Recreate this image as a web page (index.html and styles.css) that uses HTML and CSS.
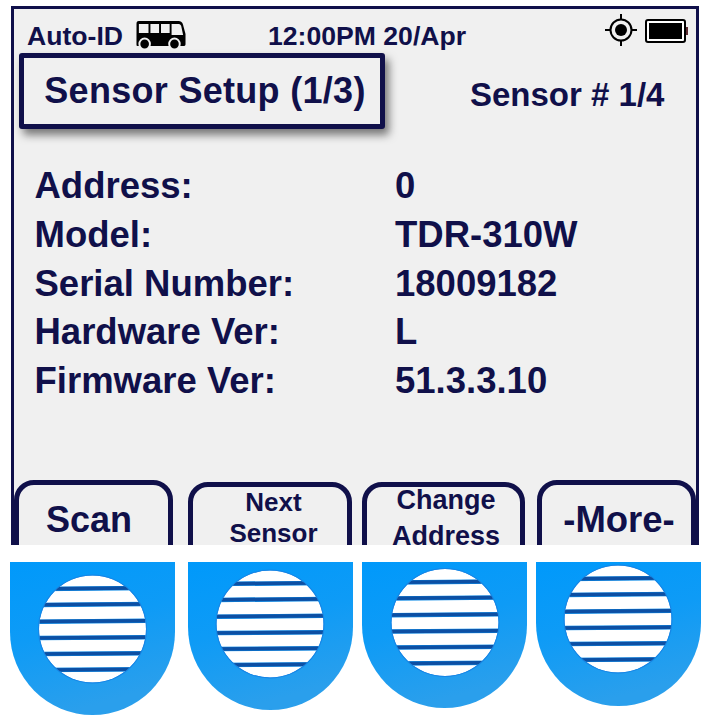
FILE: index.html
```html
<!DOCTYPE html>
<html lang="en">
<head>
  <meta charset="UTF-8">
  <meta name="viewport" content="width=device-width, initial-scale=1.0">
  <title>Sensor Setup</title>
  <link rel="stylesheet" href="styles.css">
</head>
<body>
  <div class="screen">
    <div class="status-bar">
      <span class="mode">Auto-ID</span>
      <svg class="bus" viewBox="0 0 52 29" preserveAspectRatio="none" aria-hidden="true">
        <path d="M3 1H44C47 1 48 2 49 5L51.500 14V24C51.500 25.500 51 26 49 26H1.500C.5 26 .5 25 .5 24V4C.5 2 1 1 3 1Z" fill="#000"/>
        <path d="M3 4H13V13H3ZM15 4H24V13H15ZM26 4H35V13H26ZM37 4H44.500C46 4 46.500 5 47 6L49 15H37Z" fill="#f0f0f0"/>
        <circle cx="9" cy="24" r="5.500" fill="#000" stroke="#f0f0f0" stroke-width="2"/>
        <circle cx="40" cy="24" r="5.500" fill="#000" stroke="#f0f0f0" stroke-width="2"/>
      </svg>
      <span class="clock">12:00PM 20/Apr</span>
      <svg class="gps" viewBox="0 0 34 34" aria-hidden="true">
        <circle cx="17" cy="17" r="10.500" fill="none" stroke="#000" stroke-width="2"/>
        <circle cx="17" cy="17" r="6" fill="#000"/>
        <path d="M17 1V7M17 27V33M1 17H7M27 17H33" stroke="#000" stroke-width="2"/>
      </svg>
      <svg class="battery" viewBox="0 0 44 24" aria-hidden="true">
        <rect x="1" y="1" width="39" height="22" rx="2" fill="#fff" stroke="#000" stroke-width="2"/>
        <rect x="4" y="4" width="33" height="16" fill="#000"/>
        <rect x="41" y="8" width="2" height="8" fill="#5a2a30"/>
      </svg>
    </div>

    <div class="title-row">
      <h1 class="title-box">Sensor Setup (1/3)</h1>
      <div class="sensor-num">Sensor # 1/4</div>
    </div>

    <dl class="info">
      <dt>Address:</dt><dd>0</dd>
      <dt>Model:</dt><dd>TDR-310W</dd>
      <dt>Serial Number:</dt><dd>18009182</dd>
      <dt>Hardware Ver:</dt><dd>L</dd>
      <dt>Firmware Ver:</dt><dd>51.3.3.10</dd>
    </dl>

    <div class="softkeys">
      <div class="softkey softkey-scan"><div class="softkey-label">Scan</div></div>
      <div class="softkey softkey-next"><div class="softkey-label">Next<br>Sensor</div></div>
      <div class="softkey softkey-change"><div class="softkey-label">Change<br>Address</div></div>
      <div class="softkey softkey-more"><div class="softkey-label">-More-</div></div>
    </div>
  </div>

  <svg class="defs" aria-hidden="true">
    <defs>
      <linearGradient id="keyBlue" x1="0" y1="0" x2="0.3" y2="1">
        <stop offset="0" stop-color="#0099fb"/>
        <stop offset="0.5" stop-color="#0e9bf6"/>
        <stop offset="1" stop-color="#2a9fec"/>
      </linearGradient>
      <clipPath id="grilleClip"><circle cx="0" cy="0" r="53.500"/></clipPath>
      <g id="grille">
        <circle r="54.500" fill="#1585e6"/>
        <g clip-path="url(#grilleClip)">
          <circle r="53.500" fill="#fff"/>
          <path d="M-60 -40L60 -41M-60 -24L60 -25M-60 -7.200L60 -8.200M-60 9.100L60 8.100M-60 25.100L60 24.100M-60 41.100L60 40.100" stroke="#0d8ae6" stroke-width="4.500"/>
          <path d="M-42 -40.300L42 -41M-50 -24.200L50 -25M-53 -7.400L53 -8.200M-53 9L53 8.200M-50 25L50 24.200M-42 41L42 40.300" stroke="#0d4fa3" stroke-width="3.500"/>
        </g>
      </g>
    </defs>
  </svg>

  <div class="keypad">
    <svg class="key" width="165" height="153" viewBox="0 0 165 153" aria-hidden="true">
      <path d="M0 0H165V70A82.500 83 0 0 1 0 70Z" fill="url(#keyBlue)"/>
      <use href="#grille" x="82.500" y="67"/>
    </svg>
    <svg class="key key-2" width="165" height="148" viewBox="0 0 165 148" aria-hidden="true">
      <path d="M0 0H165V65A82.500 83 0 0 1 0 65Z" fill="url(#keyBlue)"/>
      <use href="#grille" x="82" y="62"/>
    </svg>
    <svg class="key key-3" width="165" height="146" viewBox="0 0 165 146" aria-hidden="true">
      <path d="M0 0H165V63A82.500 83 0 0 1 0 63Z" fill="url(#keyBlue)"/>
      <use href="#grille" x="83" y="60.500"/>
    </svg>
    <svg class="key key-4" width="165" height="144" viewBox="0 0 165 144" aria-hidden="true">
      <path d="M0 0H165V61A82.500 83 0 0 1 0 61Z" fill="url(#keyBlue)"/>
      <use href="#grille" x="82" y="57"/>
    </svg>
  </div>
</body>
</html>
```

FILE: styles.css
```css
html, body {
  margin: 0;
  padding: 0;
  background: #ffffff;
}
body {
  font-family: "Liberation Sans", Arial, sans-serif;
  font-weight: bold;
  color: #10104a;
  width: 712px;
  height: 723px;
  overflow: hidden;
}
.screen {
  box-sizing: border-box;
  width: 688px;
  height: 539px;
  margin: 6px 0 0 11px;
  background: #f0f0f0;
  border: 3px solid #10104a;
  border-bottom: none;
  display: flex;
  flex-direction: column;
  overflow: hidden;
}
.status-bar {
  display: flex;
  align-items: center;
  height: 44px;
  padding-left: 13px;
  font-size: 26.600px;
}
.mode {
  margin-top: 10px;
}
.bus {
  width: 50px;
  height: 29px;
  margin: 7px 0 0 13px;
}
.clock {
  margin: 10px 0 0 82px;
}
.gps {
  width: 34px;
  height: 34px;
  margin: -2px 0 0 138px;
}
.battery {
  width: 44px;
  height: 24px;
  margin: -1px 0 0 7px;
}
.title-row {
  display: flex;
  align-items: flex-start;
}
.title-box {
  box-sizing: border-box;
  width: 366px;
  height: 76px;
  margin: 0 0 0 5px;
  padding-left: 6px;
  background: #f0f0f0;
  border: 5px solid #10104a;
  border-radius: 3px;
  box-shadow: 4px 6px 8px rgba(0,0,0,0.5);
  font-size: 36px;
  letter-spacing: 0.3px;
  line-height: 65px;
  text-align: center;
  white-space: nowrap;
}
.sensor-num {
  margin: 21px 0 0 85px;
  font-size: 33px;
  line-height: 42px;
}
.info {
  display: grid;
  grid-template-columns: 360.500px 1fr;
  grid-auto-rows: 48.750px;
  margin: 33px 0 0 20.500px;
  font-size: 36.500px;
  line-height: 48px;
}
.info dt, .info dd {
  margin: 0;
}
.softkeys {
  display: flex;
  align-items: flex-start;
  margin-top: auto;
  height: 65px;
  flex-shrink: 0;
}
.softkey {
  box-sizing: border-box;
  flex: none;
  height: 90px;
  border: 5px solid #10104a;
  border-radius: 20px;
  text-align: center;
}
.softkey-scan, .softkey-more {
  width: 159px;
  font-size: 36px;
  line-height: 70px;
}
.softkey-scan .softkey-label {
  margin-right: 9px;
}
.softkey-next {
  width: 164px;
  margin: 2px 0 0 15px;
  font-size: 26px;
  line-height: 31px;
}
.softkey-next .softkey-label {
  margin-left: 7px;
}
.softkey-change {
  width: 163px;
  margin: 2px 0 0 10px;
  font-size: 27px;
  line-height: 36px;
}
.softkey-change .softkey-label {
  margin: -5px 0 0 5px;
}
.softkey-more {
  margin-left: 12px;
  font-size: 36.500px;
}
.softkey-more .softkey-label {
  margin-left: 5px;
}
.defs {
  position: absolute;
  width: 0;
  height: 0;
}
.keypad {
  display: flex;
  align-items: flex-start;
  margin: 17px 0 0 10px;
}
.key {
  flex: none;
  display: block;
}
.key-2 {
  margin-left: 13px;
}
.key-3 {
  margin-left: 9px;
}
.key-4 {
  margin-left: 9px;
}
```
